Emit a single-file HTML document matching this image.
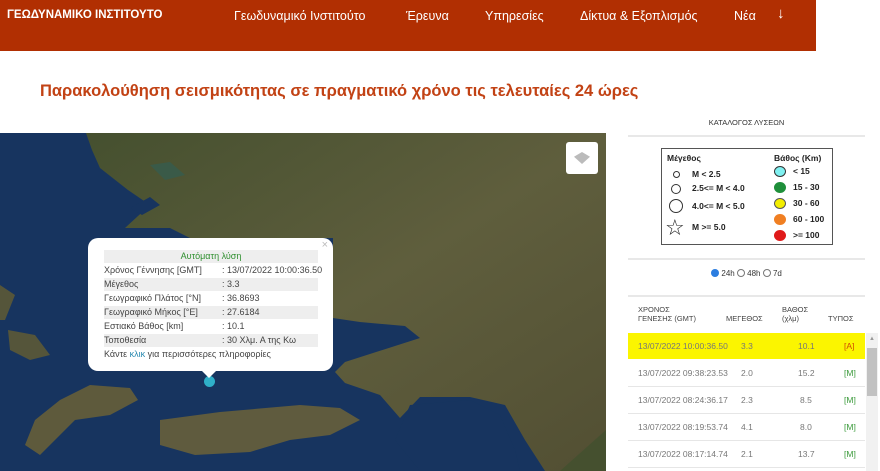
<!DOCTYPE html>
<html><head><meta charset="utf-8">
<style>
*{margin:0;padding:0;box-sizing:border-box}
body{width:880px;height:471px;overflow:hidden;background:#fff;font-family:"Liberation Sans","DejaVu Sans",sans-serif;position:relative}
.hdr{position:absolute;left:0;top:0;width:816px;height:51px;background:#b12f02}
.hdr span{position:absolute;top:9px;color:#fff;font-size:12.5px;white-space:nowrap}
.title{position:absolute;left:40px;top:82px;color:#c24214;font-size:16.5px;font-weight:bold;white-space:nowrap}
.map{position:absolute;left:0;top:133px;width:606px;height:338px;overflow:hidden;background:#17345f}
.pop{position:absolute;left:88px;top:238px;width:245px;height:133px;background:#fff;border-radius:10px;font-size:9px;color:#444}
.pop .r{position:absolute;left:16px;width:214px;height:13px;line-height:13px;white-space:nowrap}
.pop .g{background:#eee}
.pop .v{position:absolute;left:118px}
.rp{position:absolute;left:628px;width:237px}
.ln{position:absolute;left:628px;width:237px;height:2px;background:#e8e8e8}
.leg{position:absolute;left:661px;top:148px;width:172px;height:97px;border:1px solid #555;font-size:8.5px;font-weight:bold;color:#222}
.tb{position:absolute;left:628px;width:237px;font-size:8px;color:#666}
.row{position:absolute;left:628px;width:237px;height:27px;border-bottom:1px solid #e6e6e6;font-size:8.5px;color:#777;line-height:26px}
.row span{position:absolute;white-space:nowrap}
</style></head><body>
<div class="hdr">
<span style="left:7px;font-weight:bold;font-size:11.5px">ΓΕΩΔΥΝΑΜΙΚΟ ΙΝΣΤΙΤΟΥΤΟ</span>
<span style="left:234px">Γεωδυναμικό Ινστιτούτο</span>
<span style="left:406px">Έρευνα</span>
<span style="left:485px">Υπηρεσίες</span>
<span style="left:580px">Δίκτυα &amp; Εξοπλισμός</span>
<span style="left:734px">Νέα</span>
<span style="left:777px;font-size:15px;top:5px">↓</span>
</div>
<div class="title">Παρακολούθηση σεισμικότητας σε πραγματικό χρόνο τις τελευταίες 24 ώρες</div>

<div class="map">
<svg width="606" height="338" viewBox="0 133 606 338" style="position:absolute;left:0;top:0">
<defs><linearGradient id="l" x1="0" y1="0" x2="1" y2="1"><stop offset="0" stop-color="#45502f"/><stop offset=".5" stop-color="#5f5e3d"/><stop offset="1" stop-color="#524f33"/></linearGradient></defs>
<path fill="url(#l)" d="M86 133L606 133L606 471L545 471L525 440L505 405L470 397L420 397L400 418L380 395L345 383L335 372L345 362L420 338L405 326L360 322L333 318L333 238L190 238L170 228L125 228L150 205L128 190L100 168L92 150Z"/>
<path fill="#17345f" d="M150 197L160 205L142 215L130 208Z"/>
<path fill="#17345f" d="M410 405L470 400L500 415L515 450L520 471L420 471L395 440Z"/>
<path fill="#5e5a3c" d="M60 400L90 385L130 388L138 400L110 415L75 420L55 440L40 455L25 445L35 420Z"/>
<path fill="#5f5b3e" d="M160 420L220 412L300 405L340 408L360 420L330 435L290 440L250 452L195 455L160 445Z"/>
<path fill="#55553a" d="M0 285L15 295L5 320L0 320Z"/>
<path fill="#55553a" d="M8 330L35 335L50 355L30 360L10 350Z"/>
<path fill="#45502f" d="M560 471L606 430L606 471Z"/>
<path fill="#3a5a48" d="M150 165L170 162L185 175L165 180Z"/>
</svg>
<div style="position:absolute;left:566px;top:9px;width:32px;height:32px;background:#fff;border-radius:3px"><div style="position:absolute;left:8px;top:10px;width:16px;height:12px;background:#bbb;clip-path:polygon(50% 0,100% 40%,50% 100%,0 40%)"></div></div>
<div style="position:absolute;left:204px;top:243px;width:11px;height:11px;border-radius:50%;background:#2fb0c9"></div>
</div>

<div class="pop">
<div style="position:absolute;right:5px;top:1px;color:#bbb;font-size:11px">×</div>
<div class="r g" style="top:12px;text-align:center;color:#2f8f2f">Αυτόματη λύση</div>
<div class="r" style="top:26px">Χρόνος Γέννησης [GMT]<span class="v">: 13/07/2022 10:00:36.50</span></div>
<div class="r g" style="top:40px">Μέγεθος<span class="v">: 3.3</span></div>
<div class="r" style="top:54px">Γεωγραφικό Πλάτος [°N]<span class="v">: 36.8693</span></div>
<div class="r g" style="top:68px">Γεωγραφικό Μήκος [°E]<span class="v">: 27.6184</span></div>
<div class="r" style="top:82px">Εστιακό Βάθος [km]<span class="v">: 10.1</span></div>
<div class="r g" style="top:96px">Τοποθεσία<span class="v">: 30 Χλμ. Α της Κω</span></div>
<div class="r" style="top:110px">Κάντε <span style="color:#2a8ab0">κλικ</span> για περισσότερες πληροφορίες</div>
<div style="position:absolute;left:114px;top:133px;width:0;height:0;border-left:7px solid transparent;border-right:7px solid transparent;border-top:7px solid #fff"></div>
</div>

<div class="rp" style="top:118px;text-align:center;font-size:7.5px;color:#333">ΚΑΤΑΛΟΓΟΣ ΛΥΣΕΩΝ</div>
<div class="ln" style="top:135px"></div>
<div class="leg">
<div style="position:absolute;left:5px;top:4px">Μέγεθος</div>
<div style="position:absolute;left:112px;top:4px">Βάθος (Km)</div>
<div style="position:absolute;left:11px;top:22px;width:7px;height:7px;border:1px solid #333;border-radius:50%"></div>
<div style="position:absolute;left:30px;top:20px">M &lt; 2.5</div>
<div style="position:absolute;left:9px;top:35px;width:10px;height:10px;border:1px solid #333;border-radius:50%"></div>
<div style="position:absolute;left:30px;top:34px">2.5&lt;= M &lt; 4.0</div>
<div style="position:absolute;left:7px;top:50px;width:14px;height:14px;border:1px solid #333;border-radius:50%"></div>
<div style="position:absolute;left:30px;top:52px">4.0&lt;= M &lt; 5.0</div>
<div style="position:absolute;left:3px;top:68px;font-size:22px;font-weight:normal;line-height:22px">☆</div>
<div style="position:absolute;left:30px;top:73px">M &gt;= 5.0</div>
<div style="position:absolute;left:112px;top:17px;width:12px;height:11px;border-radius:50%;background:#7ff0f0;border:1px solid #333"></div>
<div style="position:absolute;left:131px;top:17px">&lt; 15</div>
<div style="position:absolute;left:112px;top:33px;width:12px;height:11px;border-radius:50%;background:#1e8f3a"></div>
<div style="position:absolute;left:131px;top:33px">15 - 30</div>
<div style="position:absolute;left:112px;top:49px;width:12px;height:11px;border-radius:50%;background:#f3ee00;border:1px solid #555"></div>
<div style="position:absolute;left:131px;top:49px">30 - 60</div>
<div style="position:absolute;left:112px;top:65px;width:12px;height:11px;border-radius:50%;background:#f07f22"></div>
<div style="position:absolute;left:131px;top:65px">60 - 100</div>
<div style="position:absolute;left:112px;top:81px;width:12px;height:11px;border-radius:50%;background:#e01a1a"></div>
<div style="position:absolute;left:131px;top:81px">&gt;= 100</div>
</div>
<div class="ln" style="top:258px"></div>
<div class="rp" style="top:269px;text-align:center;font-size:8px;color:#333"><span style="display:inline-block;width:8px;height:8px;border-radius:50%;background:#2b7de0;vertical-align:-1px"></span> 24h <span style="display:inline-block;width:8px;height:8px;border-radius:50%;border:1px solid #777;vertical-align:-1px"></span> 48h <span style="display:inline-block;width:8px;height:8px;border-radius:50%;border:1px solid #777;vertical-align:-1px"></span> 7d</div>
<div class="ln" style="top:295px"></div>
<div class="tb" style="top:305px;color:#444;font-size:7.5px">
<span style="position:absolute;left:10px">ΧΡΟΝΟΣ<br>ΓΕΝΕΣΗΣ (GMT)</span>
<span style="position:absolute;left:98px;top:9px">ΜΕΓΕΘΟΣ</span>
<span style="position:absolute;left:154px">ΒΑΘΟΣ<br>(χλμ)</span>
<span style="position:absolute;left:200px;top:9px">ΤΥΠΟΣ</span>
</div>
<div class="row" style="top:333px;background:#fbf500;height:26px;border:none"><span style="left:10px">13/07/2022 10:00:36.50</span><span style="left:113px">3.3</span><span style="left:170px">10.1</span><span style="left:216px;color:#d04a00">[A]</span></div>
<div class="row" style="top:360px"><span style="left:10px">13/07/2022 09:38:23.53</span><span style="left:113px">2.0</span><span style="left:170px">15.2</span><span style="left:216px;color:#3a9a3a">[M]</span></div>
<div class="row" style="top:387px"><span style="left:10px">13/07/2022 08:24:36.17</span><span style="left:113px">2.3</span><span style="left:172px">8.5</span><span style="left:216px;color:#3a9a3a">[M]</span></div>
<div class="row" style="top:414px"><span style="left:10px">13/07/2022 08:19:53.74</span><span style="left:113px">4.1</span><span style="left:172px">8.0</span><span style="left:216px;color:#3a9a3a">[M]</span></div>
<div class="row" style="top:441px"><span style="left:10px">13/07/2022 08:17:14.74</span><span style="left:113px">2.1</span><span style="left:170px">13.7</span><span style="left:216px;color:#3a9a3a">[M]</span></div>
<div style="position:absolute;left:866px;top:333px;width:12px;height:138px;background:#f1f1f1"></div>
<div style="position:absolute;left:867px;top:348px;width:10px;height:48px;background:#c1c1c1"></div>
<div style="position:absolute;left:869px;top:336px;font-size:6px;color:#999">▲</div>
</body></html>
